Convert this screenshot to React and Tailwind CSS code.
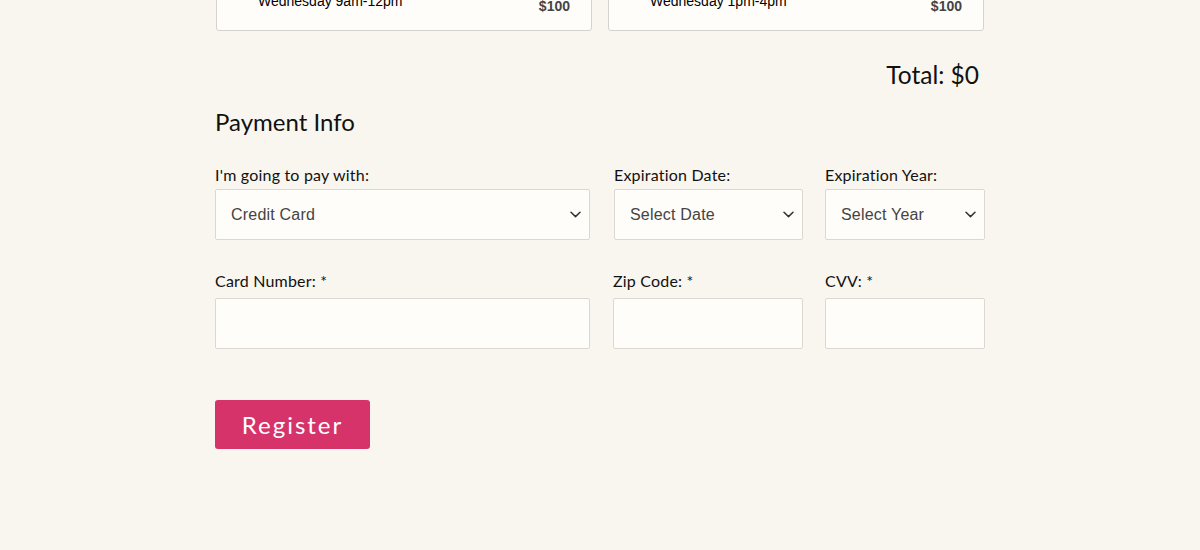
import React from "react";

const Chevron = () => (
  <svg width="11" height="7" viewBox="0 0 11 7" className="shrink-0">
    <path d="M1 1.2 L5.5 5.6 L10 1.2" fill="none" stroke="#333" strokeWidth="1.5" strokeLinecap="round" strokeLinejoin="round" />
  </svg>
);

const Select = ({ text, w }) => (
  <div className={`${w} h-[51px] flex items-center justify-between pl-[15px] pr-[8px] bg-[#fffdf9] border border-[#dcd8d1] rounded-[2px] text-[16px] text-[#444] font-['Liberation_Sans',Arial,sans-serif]`}>
    <span>{text}</span>
    <Chevron />
  </div>
);

const Input = ({ w }) => (
  <div className={`${w} h-[51px] bg-[#fffdf9] border border-[#dcd8d1] rounded-[2px]`} />
);

const Card = ({ time }) => (
  <div className="w-[376px] h-[80px] flex items-end justify-between pl-[41px] pr-[21px] pb-[16px] bg-[#fffdfa] border border-[#d6d2cc] rounded-[3px] font-['Liberation_Sans',Arial,sans-serif] text-[14px] leading-[16px]">
    <div className="mb-[5px] text-black">{time}</div>
    <div className="font-bold text-[#444]">$100</div>
  </div>
);

export default function App() {
  return (
    <div className="w-[1200px] h-[550px] overflow-hidden bg-[#f9f5ef] font-['Lato','Nunito',sans-serif] text-[#111]">
      <div className="w-[770px] ml-[215px]">
        <div className="flex justify-between px-[1px] mt-[-49px]">
          <Card time="Wednesday 9am-12pm" />
          <Card time="Wednesday 1pm-4pm" />
        </div>
        <div className="flex justify-end pr-[6px] mt-[29px] text-[24.5px] leading-[29px]">Total: $0</div>
        <div className="mt-[18px] text-[24px] leading-[29px]">Payment Info</div>
        <div className="mt-[29px] flex tracking-[0.2px]">
          <div className="w-[375px]">
            <div className="text-[16px] leading-[19px] mb-[5px]">I'm going to pay with:</div>
            <Select text="Credit Card" w="w-[375px]" />
          </div>
          <div className="w-[189px] ml-[24px]">
            <div className="text-[16px] leading-[19px] mb-[5px]">Expiration Date:</div>
            <Select text="Select Date" w="w-[189px]" />
          </div>
          <div className="w-[160px] ml-[22px]">
            <div className="text-[16px] leading-[19px] mb-[5px]">Expiration Year:</div>
            <Select text="Select Year" w="w-[160px]" />
          </div>
        </div>
        <div className="mt-[31px] flex tracking-[0.2px]">
          <div className="w-[375px]">
            <div className="text-[16px] leading-[19px] mb-[8px]">Card Number: *</div>
            <Input w="w-[375px]" />
          </div>
          <div className="w-[190px] ml-[23px]">
            <div className="text-[16px] leading-[19px] mb-[8px]">Zip Code: *</div>
            <Input w="w-[190px]" />
          </div>
          <div className="w-[160px] ml-[22px]">
            <div className="text-[16px] leading-[19px] mb-[8px]">CVV: *</div>
            <Input w="w-[160px]" />
          </div>
        </div>
        <button className="mt-[51px] w-[155px] h-[49px] bg-[#d6336a] text-white text-[24px] tracking-[2px] rounded-[3px] flex items-center justify-center">
          Register
        </button>
      </div>
    </div>
  );
}
